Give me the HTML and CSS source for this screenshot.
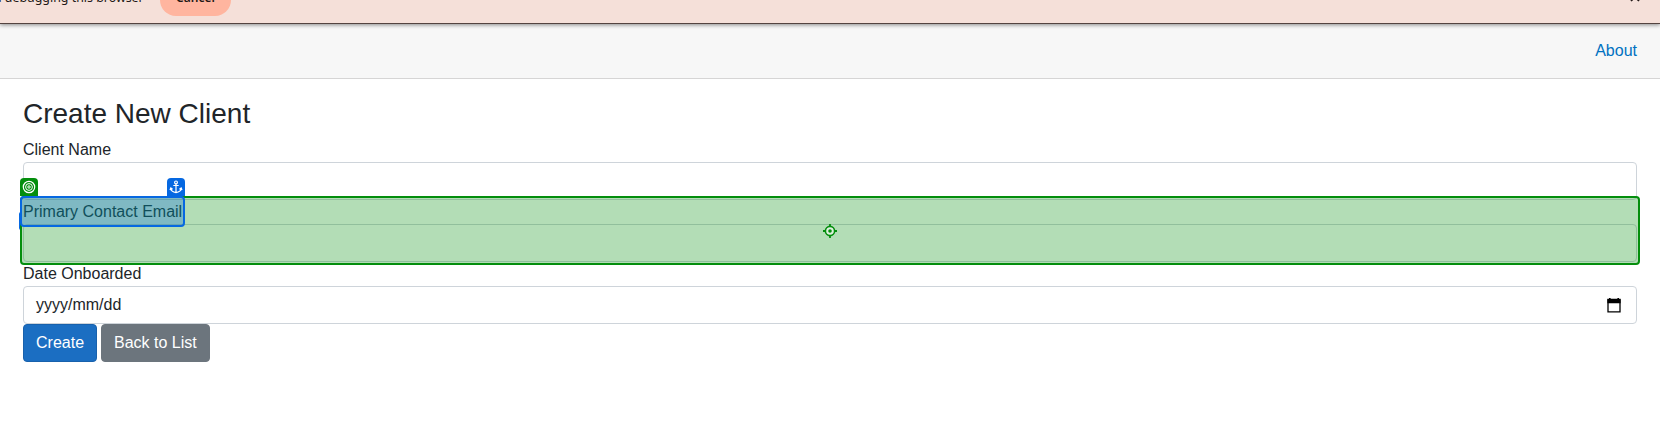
FILE: index.html
```html
<!DOCTYPE html>
<html lang="en">
<head>
<meta charset="utf-8">
<title>Create New Client</title>
<link rel="stylesheet" href="styles.css">
</head>
<body>
<div class="infobar">
  <span class="infobar-text">d debugging this browser</span>
  <span class="infobar-cancel">Cancel</span>
  <svg class="infobar-close" width="10" height="10" viewBox="0 0 10 10"><path d="M1 1l8 8M9 1L1 9" stroke="#231917" stroke-width="1.7"/></svg>
</div>
<header class="topbar"><a class="about">About</a></header>
<main class="content">
  <h3 class="title">Create New Client</h3>
  <label class="label">Client Name</label>
  <div class="control"></div>
  <div class="group">
    <label class="label">Primary Contact Email</label>
    <div class="control"></div>
    <div class="sliver"></div>
    <div class="target">
      <svg class="crosshair" width="14" height="14" viewBox="0 0 14 14"><circle cx="7" cy="7" r="4.6" fill="#dff0df" stroke="#048e0d" stroke-width="1.6"/><circle cx="7" cy="7" r="1.8" fill="#048e0d"/><path d="M7 0v3M7 11v3M0 7h3M11 7h3" stroke="#048e0d" stroke-width="1.8"/></svg>
    </div>
    <div class="anchor"></div>
    <div class="tab tab-target">
      <svg width="14" height="14" viewBox="0 0 14 14" fill="none" stroke="#fff"><circle cx="7" cy="7" r="5.7" stroke-width="1.2"/><circle cx="7" cy="7" r="3.4"/><circle cx="7" cy="7" r="1.2"/></svg>
    </div>
    <div class="tab tab-anchor">
      <svg width="14" height="14" viewBox="0 0 14 14" fill="none" stroke="#fff" stroke-width="1.2"><circle cx="7" cy="2.4" r="1.4"/><path d="M7 3.8V12.5M4.3 5.5h5.4M1.7 8.3C2 11 4 12.3 7 12.6c3-.3 5-1.6 5.3-4.3M1 10l.8-2 1.8 1.3M13 10l-.8-2-1.8 1.3"/></svg>
    </div>
  </div>
  <label class="label">Date Onboarded</label>
  <div class="control date">
    <span>yyyy/mm/dd</span>
    <svg width="14" height="15" viewBox="0 0 14 15"><path d="M1 1.5h12v12.3H1z" fill="none" stroke="#000" stroke-width="1.3"/><path d="M.4 1.2h13.2v4H.4zM2 0h1.6v2H2zM10.4 0H12v2h-1.6z"/></svg>
  </div>
  <div class="actions"><button class="btn primary">Create</button><button class="btn secondary">Back to List</button></div>
</main>
</body>
</html>
```
FILE: styles.css
```css
* { box-sizing: border-box; }
body {
  margin: 0;
  height: 442px;
  overflow: hidden;
  background: #fff;
  color: #212529;
  font: 16px/24px "Liberation Sans", Arial, sans-serif;
}
.infobar {
  position: relative;
  z-index: 1;
  display: flex;
  align-items: flex-end;
  height: 24px;
  overflow: visible;
  background: #f5e0d9;
  border-bottom: 1px solid #534340;
  box-shadow: 0 1px 4px rgba(0, 0, 0, .45);
  color: #231917;
  font: 12.4px/16px "Noto Sans", sans-serif;
}
.infobar-text { width: 162px; margin-left: -6px; margin-bottom: 17px; white-space: nowrap; }
.infobar-cancel {
  width: 71px;
  height: 32px;
  margin-left: 4px;
  margin-bottom: 7px;
  padding-top: 6px;
  border-radius: 16px;
  background: #ffb59f;
  font-size: 12px;
  font-weight: 600;
  text-align: center;
}
.infobar-close { margin: 0 20px 21px auto; }
.topbar {
  display: flex;
  justify-content: flex-end;
  height: 55px;
  padding: 15px 23px 0 0;
  background: #f7f7f7;
  border-bottom: 1px solid #d6d5d5;
}
.about { color: #0071c1; }
.content { padding: 18px 23px 0; }
.title { margin: 0 0 8px; font-size: 28px; font-weight: 400; line-height: 33px; }
.label { display: block; height: 24px; }
.control { height: 38px; border: 1px solid #ced4da; border-radius: 4px; background: #fff; }
.group { position: relative; }
.target {
  position: absolute;
  inset: -4px -3px -3px;
  display: flex;
  align-items: center;
  justify-content: center;
  border: 2px solid #048e0d;
  border-radius: 4px;
  background: rgba(4, 142, 13, .3);
}
.anchor {
  position: absolute;
  left: -3px;
  top: -4px;
  width: 165px;
  height: 31px;
  border: 2px solid #0668e1;
  border-radius: 4px;
  background: rgba(6, 104, 225, .3);
}
.sliver { position: absolute; left: -4px; top: 12px; width: 2px; height: 18px; background: #0668e1; border-radius: 2px 0 0 2px; }
.tab {
  position: absolute;
  top: -22px;
  display: grid;
  place-items: center;
  width: 18px;
  height: 18px;
  border-radius: 4px 4px 0 0;
}
.tab-target { left: -3px; background: #048e0d; }
.tab-anchor { left: 144px; background: #0668e1; }
.date { display: flex; align-items: center; justify-content: space-between; padding: 0 15px 0 12px; }
.actions { display: flex; gap: 4px; }
.btn {
  height: 38px;
  padding: 0 12px;
  border: 1px solid;
  border-radius: 4px;
  color: #fff;
  font: inherit;
}
.primary { background: #1b6ec2; border-color: #1861ac; }
.secondary { background: #6c757d; border-color: #6c757d; }
```
